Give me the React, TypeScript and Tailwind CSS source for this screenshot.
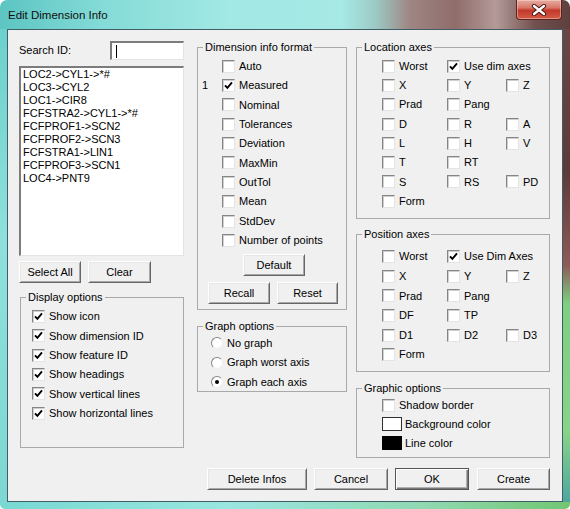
import React from "react";

type Item = { t: string; c?: boolean };

const LIST = [
  "LOC2->CYL1->*#",
  "LOC3->CYL2",
  "LOC1->CIR8",
  "FCFSTRA2->CYL1->*#",
  "FCFPROF1->SCN2",
  "FCFPROF2->SCN3",
  "FCFSTRA1->LIN1",
  "FCFPROF3->SCN1",
  "LOC4->PNT9",
];

const DISPLAY = [
  "Show icon",
  "Show dimension ID",
  "Show feature ID",
  "Show headings",
  "Show vertical lines",
  "Show horizontal lines",
];

const FORMAT: Item[] = [
  { t: "Auto" },
  { t: "Measured", c: true },
  { t: "Nominal" },
  { t: "Tolerances" },
  { t: "Deviation" },
  { t: "MaxMin" },
  { t: "OutTol" },
  { t: "Mean" },
  { t: "StdDev" },
  { t: "Number of points" },
];

const LOCATION: Item[][] = [
  [{ t: "Worst" }, { t: "Use dim axes", c: true }],
  [{ t: "X" }, { t: "Y" }, { t: "Z" }],
  [{ t: "Prad" }, { t: "Pang" }],
  [{ t: "D" }, { t: "R" }, { t: "A" }],
  [{ t: "L" }, { t: "H" }, { t: "V" }],
  [{ t: "T" }, { t: "RT" }],
  [{ t: "S" }, { t: "RS" }, { t: "PD" }],
  [{ t: "Form" }],
];

const POSITION: Item[][] = [
  [{ t: "Worst" }, { t: "Use Dim Axes", c: true }],
  [{ t: "X" }, { t: "Y" }, { t: "Z" }],
  [{ t: "Prad" }, { t: "Pang" }],
  [{ t: "DF" }, { t: "TP" }],
  [{ t: "D1" }, { t: "D2" }, { t: "D3" }],
  [{ t: "Form" }],
];

function Box({ checked }: { checked?: boolean }) {
  return (
    <span className="w-[13px] h-[13px] shrink-0 bg-white border border-t-[#858585] border-l-[#858585] border-r-[#e4e4e4] border-b-[#e4e4e4] shadow-[inset_1px_1px_0_#cfcfcf] flex items-center justify-center">
      {checked && (
        <svg width="9" height="9" viewBox="0 0 9 9">
          <path d="M1 4.3 L3.4 6.9 L8 1.4" fill="none" stroke="#000" strokeWidth="1.9" />
        </svg>
      )}
    </span>
  );
}

function Radio({ checked }: { checked?: boolean }) {
  return (
    <span className="w-[12px] h-[12px] shrink-0 rounded-full bg-white border border-t-[#858585] border-l-[#858585] border-r-[#eeeeee] border-b-[#eeeeee] flex items-center justify-center">
      {checked && <span className="w-[4px] h-[4px] rounded-full bg-black" />}
    </span>
  );
}

function Btn({ children, className = "", def }: { children: React.ReactNode; className?: string; def?: boolean }) {
  return (
    <button
      type="button"
      className={`flex items-center justify-center bg-[#f0f0f0] text-black ${
        def
          ? "border border-[#555555] shadow-[inset_1px_1px_0_#ffffff,inset_-1px_-1px_0_#777777,inset_-2px_-2px_0_#b0b0b0]"
          : "border border-t-[#ffffff] border-l-[#ffffff] border-r-[#666666] border-b-[#666666] shadow-[inset_1px_1px_0_#e6e6e6,inset_-1px_-1px_0_#a8a8a8]"
      } ${className}`}
    >
      {children}
    </button>
  );
}

// fieldset padding shifts the legend, so content padding goes on an inner div
function Group({
  title,
  className = "",
  inner = "",
  children,
}: {
  title: string;
  className?: string;
  inner?: string;
  children: React.ReactNode;
}) {
  return (
    <fieldset className={`border border-[#a9a9a9] ${className}`}>
      <legend className="ml-[5px] px-[2px] leading-[13px]">{title}</legend>
      <div className={inner}>{children}</div>
    </fieldset>
  );
}

function AxisRow({ items, rowH }: { items: Item[]; rowH: string }) {
  return (
    <div className={`flex items-center pl-[25px] ${rowH}`}>
      {items.map((it, i) => (
        <div
          key={i}
          className={`flex items-center gap-[4px] whitespace-nowrap ${i === 0 ? "w-[65px]" : i === 1 ? "w-[59px]" : ""}`}
        >
          <Box checked={it.c} />
          <span>{it.t}</span>
        </div>
      ))}
    </div>
  );
}

export default function App() {
  return (
    <div className="w-[570px] h-[509px] flex flex-col rounded-t-[7px] rounded-b-[5px] overflow-hidden font-['Liberation_Sans',Arial,sans-serif] text-[11px] text-black">
      {/* title bar */}
      <div className="h-[29px] shrink-0 flex items-start bg-[linear-gradient(90deg,#5cc5c2_0%,#84dbd7_18%,#a2e8e4_40%,#a6e9e5_60%,#9cc9c4_66%,#9e8583_72%,#8f6d6b_80%,#b39a98_87%,#704f4d_94%,#5e403e_100%)]">
        <span className="pl-[8px] pt-[8px] text-[11.5px] leading-[14px] text-[#101010]">Edit Dimension Info</span>
        <div className="ml-auto mr-[8px] w-[46px] h-[20px] rounded-b-[4px] border border-t-0 border-[#5a2420] bg-[linear-gradient(180deg,#e6ada3_0%,#d8786a_40%,#c2392b_55%,#d45a45_100%)] shadow-[inset_0_0_0_1px_rgba(255,220,210,0.45)] flex items-center justify-center">
          <svg width="16" height="12" viewBox="0 0 16 12">
            <path d="M3 2 L13 10 M13 2 L3 10" stroke="#4a1812" strokeWidth="4.2" strokeLinecap="round" />
            <path d="M3 2 L13 10 M13 2 L3 10" stroke="#ffffff" strokeWidth="2.3" strokeLinecap="round" />
          </svg>
        </div>
      </div>

      <div className="flex flex-1 min-h-0">
        <div className="w-[7px] bg-[linear-gradient(180deg,#6dd0cc_0%,#8fe0dc_45%,#7ed7d2_100%)]" />

        {/* client area */}
        <div className="w-[556px] border border-[#3f5e66] bg-[#f0f0f0] flex flex-col pt-[11px] pl-[11px]">
          <div className="flex items-start">
            {/* left column */}
            <div className="w-[165px] flex flex-col">
              <div className="h-[19px] flex items-center justify-between">
                <span>Search ID:</span>
                <div className="w-[74px] h-[19px] bg-white border-t-2 border-l-2 border-t-[#7c7c7c] border-l-[#7c7c7c] border-r border-b border-r-[#e4e4e4] border-b-[#e4e4e4] flex items-center pl-[4px]">
                  <span className="w-px h-[13px] bg-black" />
                </div>
              </div>
              <div className="mt-[6px] h-[190px] bg-white border-t-2 border-l-2 border-t-[#7c7c7c] border-l-[#7c7c7c] border-r border-b border-r-[#e4e4e4] border-b-[#e4e4e4] pl-[2px] flex flex-col">
                {LIST.map((s) => (
                  <span key={s} className="leading-[13px] whitespace-nowrap">{s}</span>
                ))}
              </div>
              <div className="mt-[5px] flex gap-[7px]">
                <Btn className="w-[62px] h-[22px]">Select All</Btn>
                <Btn className="w-[63px] h-[22px]">Clear</Btn>
              </div>
              <Group title="Display options" className="mt-[8px] ml-[1px]" inner="pt-[3px] pl-[11px] pb-[24px]">
                {DISPLAY.map((s) => (
                  <div key={s} className="h-[19.3px] flex items-center gap-[4px]">
                    <Box checked />
                    <span>{s}</span>
                  </div>
                ))}
              </Group>
            </div>

            {/* middle column */}
            <div className="ml-[13px] w-[150px] flex flex-col">
              <Group title="Dimension info format" inner="pb-[5px]">
                <div className="pt-[2.5px]">
                  {FORMAT.map((f) => (
                    <div key={f.t} className="h-[19.37px] flex items-center">
                      <span className="w-[24px] pl-[4px]">{f.c ? "1" : ""}</span>
                      <Box checked={f.c} />
                      <span className="ml-[4px]">{f.t}</span>
                    </div>
                  ))}
                </div>
                <div className="mt-[4px] pl-[45px]">
                  <Btn className="w-[62px] h-[22px]">Default</Btn>
                </div>
                <div className="mt-[6px] pl-[10px] flex gap-[7px]">
                  <Btn className="w-[62px] h-[22px]">Recall</Btn>
                  <Btn className="w-[61px] h-[22px]">Reset</Btn>
                </div>
              </Group>
              <Group title="Graph options" className="mt-[9.5px]" inner="pt-[1px] pl-[13px]">
                {[
                  { t: "No graph" },
                  { t: "Graph worst axis" },
                  { t: "Graph each axis", c: true },
                ].map((r) => (
                  <div key={r.t} className="h-[19.3px] flex items-center gap-[4px]">
                    <Radio checked={r.c} />
                    <span>{r.t}</span>
                  </div>
                ))}
              </Group>
            </div>

            {/* right column */}
            <div className="ml-[9px] w-[194px] flex flex-col">
              <Group title="Location axes" inner="pt-[2.5px] pb-[7px]">
                {LOCATION.map((row, i) => (
                  <AxisRow key={i} items={row} rowH="h-[19.3px]" />
                ))}
              </Group>
              <Group title="Position axes" className="mt-[9.5px]" inner="pt-[5.5px] pb-[7px]">
                {POSITION.map((row, i) => (
                  <AxisRow key={i} items={row} rowH="h-[19.6px]" />
                ))}
              </Group>
              <Group title="Graphic options" className="mt-[9.5px]" inner="pt-[1px] pb-[4px] pl-[25px]">
                <div className="h-[19px] flex items-center gap-[4px]">
                  <Box />
                  <span>Shadow border</span>
                </div>
                <div className="h-[19px] flex items-center gap-[3px]">
                  <span className="w-[20px] h-[14px] bg-white border border-[#303030]" />
                  <span>Background color</span>
                </div>
                <div className="h-[19px] flex items-center gap-[3px]">
                  <span className="w-[20px] h-[14px] bg-black" />
                  <span>Line color</span>
                </div>
              </Group>
            </div>
          </div>

          {/* bottom buttons */}
          <div className="mt-[10px] pl-[188px] flex">
            <Btn className="w-[100px] h-[22px]">Delete Infos</Btn>
            <Btn className="ml-[7px] w-[74px] h-[22px]">Cancel</Btn>
            <Btn def className="ml-[7px] w-[74px] h-[22px]">OK</Btn>
            <Btn className="ml-[8px] w-[73px] h-[22px]">Create</Btn>
          </div>
        </div>

        <div className="w-[7px] bg-[linear-gradient(180deg,#6a4644_0%,#5b3b39_30%,#8c5c58_50%,#7ecf80_58%,#88d488_85%,#4ea69e_100%)]" />
      </div>
      <div className="h-[7px] shrink-0 bg-[linear-gradient(90deg,#78d8d2_0%,#9ae6e0_40%,#8fd8b0_75%,#72c672_100%)]" />
    </div>
  );
}
